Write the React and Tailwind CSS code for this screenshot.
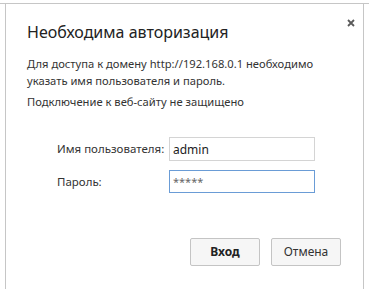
import { useState } from "react";

const AuthDialog = () => {
  const [user, setUser] = useState("admin");
  const [pass, setPass] = useState("*****");

  return (
    <div className="w-[369px] h-[289px] bg-white overflow-hidden pt-[3px] font-['Noto_Sans',sans-serif] text-[#222]">
      <div className="h-[286px] border-t border-[#c6c6c6]">
        {/* Dialog */}
        <div className="relative mx-[5px] h-full border-x border-[#c6c6c6] pl-[21px] pr-[22px] pt-[18px]">
          <button className="absolute right-[5px] top-[12px] w-[14px] h-[14px] flex items-center justify-center text-[#5a5a5a]">
            <svg width="8" height="8" viewBox="0 0 8 8">
              <path d="M1 1L7 7M7 1L1 7" stroke="currentColor" strokeWidth="1.8" />
            </svg>
          </button>

          <h1 className="text-[16px] leading-[21px] text-[#222]">Необходима авторизация</h1>

          <p className="mt-[12px] text-[11.2px] leading-[17px] text-[#333]">
            Для доступа к домену http://192.168.0.1 необходимо указать имя пользователя и пароль.
          </p>
          <p className="mt-[4px] text-[11.2px] leading-[17px] text-[#333]">
            Подключение к веб-сайту не защищено
          </p>

          {/* Form */}
          <div className="mt-[27px] ml-[30px] grid grid-cols-[112px_146px] gap-y-[9px] items-center text-[11.5px] text-[#333]">
            <label>Имя пользователя:</label>
            <input
              value={user}
              onChange={(e) => setUser(e.target.value)}
              className="h-[24px] border border-[#d4d4d4] px-[3px] text-[12px] text-[#222] outline-none"
            />
            <label>Пароль:</label>
            <input
              value={pass}
              onChange={(e) => setPass(e.target.value)}
              className="h-[23px] border border-[#6a9cd6] px-[3px] text-[11px] text-[#666] outline-none"
            />
          </div>

          {/* Buttons */}
          <div className="mt-[45px] flex justify-end gap-[11px] text-[12px]">
            <button className="w-[70px] h-[28px] border border-[#c4c4c4] rounded-[2px] bg-[#f6f6f6] font-bold text-[#222]">
              Вход
            </button>
            <button className="w-[70px] h-[28px] border border-[#c4c4c4] rounded-[2px] bg-[#f6f6f6] text-[#333]">
              Отмена
            </button>
          </div>
        </div>
      </div>
    </div>
  );
};

export default AuthDialog;
